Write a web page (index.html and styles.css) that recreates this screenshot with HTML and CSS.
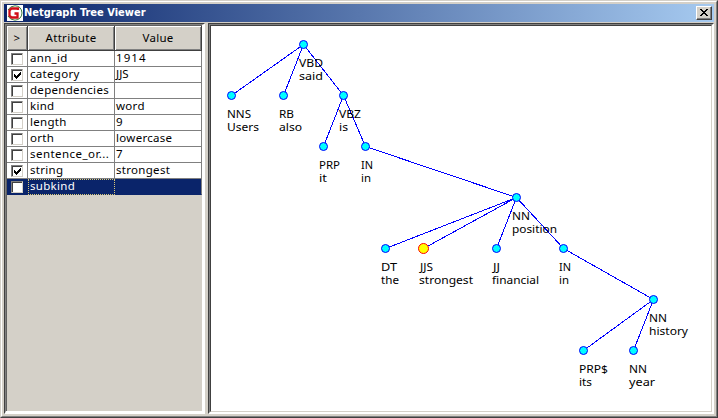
FILE: index.html
```html
<!DOCTYPE html>
<html lang="en">
<head>
<meta charset="utf-8">
<title>Netgraph Tree Viewer</title>
<link rel="stylesheet" href="styles.css">
</head>
<body>
<div class="window">
  <div class="frame">
    <header class="titlebar">
      <svg class="logo" width="16" height="16" viewBox="0 0 16 16">
        <rect width="16" height="16" fill="#fff"/>
        <path d="M1 5Q3 1 8 .8Q14.5 1 15 8Q14.5 14.5 8 15.2Q3 15 1 11" fill="none" stroke="#3d803d" stroke-width="1"/>
        <path d="M11 5V3.500H4.500L2.500 5.500V10.500L4.500 12.500H10.500V8.500H7.500" fill="none" stroke="#d00d16" stroke-width="2.300"/>
      </svg>
      <span class="title">Netgraph Tree Viewer</span>
      <button class="close" aria-label="Close"><svg width="8" height="7" viewBox="0 0 8 7" shape-rendering="crispEdges"><path d="M0 0h2v1h-2zM6 0h2v1h-2zM1 1h2v1h-2zM5 1h2v1h-2zM2 2h4v1h-4zM3 3h2v1h-2zM2 4h4v1h-4zM1 5h2v1h-2zM5 5h2v1h-2zM0 6h2v1h-2zM6 6h2v1h-2z"/></svg></button>
    </header>
    <main class="content">
      <section class="panel attributes">
        <div class="inner">
          <div class="row head"><span>&gt;</span><span>Attribute</span><span>Value</span></div>
          <div class="row"><span><i class="check"></i></span><span>ann_id</span><span class="digits">1914</span></div>
          <div class="row"><span><i class="check"><svg width="7" height="7" viewBox="0 0 7 7" shape-rendering="crispEdges"><path d="M0 2h1v1h1v1h1v-1h1v-1h1v-1h1v-1h1v3h-1v1h-1v1h-1v1h-1v1h-1v-1h-1v-1h-1z"/></svg></i></span><span>category</span><span class="tight">JJS</span></div>
          <div class="row"><span><i class="check"></i></span><span>dependencies</span><span></span></div>
          <div class="row"><span><i class="check"></i></span><span>kind</span><span>word</span></div>
          <div class="row"><span><i class="check"></i></span><span>length</span><span>9</span></div>
          <div class="row"><span><i class="check"></i></span><span>orth</span><span>lowercase</span></div>
          <div class="row"><span><i class="check"></i></span><span class="clipped">sentence_or...</span><span>7</span></div>
          <div class="row"><span><i class="check"><svg width="7" height="7" viewBox="0 0 7 7" shape-rendering="crispEdges"><path d="M0 2h1v1h1v1h1v-1h1v-1h1v-1h1v-1h1v3h-1v1h-1v1h-1v1h-1v1h-1v-1h-1v-1h-1z"/></svg></i></span><span>string</span><span>strongest</span></div>
          <div class="row selected"><span><i class="check"></i></span><span class="focus">subkind</span><span></span></div>
        </div>
      </section>
      <section class="panel tree">
        <div class="well">
        <svg class="canvas" width="500" height="385" viewBox="211 26 500 385">
          <path class="edges" d="M303.500 44.500L231.500 95.500M303.500 44.500L283.500 95.500M303.500 44.500L343.500 95.500M343.500 95.500L323.500 146.500M343.500 95.500L365.500 146.500M365.500 146.500L516.500 197.500M516.500 197.500L385.500 248.500M516.500 197.500L423.500 248.500M516.500 197.500L496.500 248.500M516.500 197.500L563.500 248.500M563.500 248.500L653.500 299.500M653.500 299.500L583.500 350.500M653.500 299.500L633.500 350.500"/>
          <g class="nodes">
            <circle cx="303.500" cy="44.500" r="4"/><circle cx="231.500" cy="95.500" r="4"/><circle cx="283.500" cy="95.500" r="4"/><circle cx="343.500" cy="95.500" r="4"/>
            <circle cx="323.500" cy="146.500" r="4"/><circle cx="365.500" cy="146.500" r="4"/><circle cx="516.500" cy="197.500" r="4"/>
            <circle cx="385.500" cy="248.500" r="4"/><circle class="match" cx="423.500" cy="248.500" r="5"/><circle cx="496.500" cy="248.500" r="4"/><circle cx="563.500" cy="248.500" r="4"/>
            <circle cx="653.500" cy="299.500" r="4"/><circle cx="583.500" cy="350.500" r="4"/><circle cx="633.500" cy="350.500" r="4"/>
          </g>
          <g class="labels">
            <text x="299" y="67" textLength="24" lengthAdjust="spacingAndGlyphs">VBD</text><text x="299" y="80" textLength="24" lengthAdjust="spacingAndGlyphs">said</text>
            <text x="227" y="118" textLength="24" lengthAdjust="spacingAndGlyphs">NNS</text><text x="227" y="131" textLength="32" lengthAdjust="spacingAndGlyphs">Users</text>
            <text x="279" y="118" textLength="15" lengthAdjust="spacingAndGlyphs">RB</text><text x="279" y="131" textLength="23" lengthAdjust="spacingAndGlyphs">also</text>
            <text x="339" y="118" textLength="22" lengthAdjust="spacingAndGlyphs">VBZ</text><text x="339" y="131" textLength="9" lengthAdjust="spacingAndGlyphs">is</text>
            <text x="319" y="169" textLength="21" lengthAdjust="spacingAndGlyphs">PRP</text><text x="319" y="182" textLength="8" lengthAdjust="spacingAndGlyphs">it</text>
            <text x="361" y="169" textLength="12" lengthAdjust="spacingAndGlyphs">IN</text><text x="361" y="182" textLength="10" lengthAdjust="spacingAndGlyphs">in</text>
            <text x="512" y="220" textLength="18" lengthAdjust="spacingAndGlyphs">NN</text><text x="512" y="233" textLength="45" lengthAdjust="spacingAndGlyphs">position</text>
            <text x="381" y="271" textLength="16" lengthAdjust="spacingAndGlyphs">DT</text><text x="381" y="284" textLength="18" lengthAdjust="spacingAndGlyphs">the</text>
            <text x="420" y="271" textLength="13" lengthAdjust="spacingAndGlyphs">JJS</text><text x="419" y="284" textLength="54" lengthAdjust="spacingAndGlyphs">strongest</text>
            <text x="493" y="271" textLength="7" lengthAdjust="spacingAndGlyphs">JJ</text><text x="492" y="284" textLength="47" lengthAdjust="spacingAndGlyphs">financial</text>
            <text x="559" y="271" textLength="12" lengthAdjust="spacingAndGlyphs">IN</text><text x="559" y="284" textLength="10" lengthAdjust="spacingAndGlyphs">in</text>
            <text x="649" y="322" textLength="18" lengthAdjust="spacingAndGlyphs">NN</text><text x="649" y="335" textLength="39" lengthAdjust="spacingAndGlyphs">history</text>
            <text x="579" y="373" textLength="29" lengthAdjust="spacingAndGlyphs">PRP$</text><text x="579" y="386" textLength="13" lengthAdjust="spacingAndGlyphs">its</text>
            <text x="629" y="373" textLength="18" lengthAdjust="spacingAndGlyphs">NN</text><text x="629" y="386" textLength="26" lengthAdjust="spacingAndGlyphs">year</text>
          </g>
        </svg>
        </div>
      </section>
    </main>
  </div>
</div>
</body>
</html>
```
FILE: styles.css
```css
* { box-sizing: border-box; }
body { margin: 0; overflow: hidden; font-family: "Noto Sans", "Open Sans", sans-serif; }
.window {
  width: 718px; height: 418px; background: #d4d0c8;
  border: 1px solid; border-color: #d4d0c8 #404040 #404040 #d4d0c8;
}
.frame {
  height: 416px; padding: 2px;
  border: 1px solid; border-color: #fff #808080 #808080 #fff;
}
.titlebar {
  height: 18px; display: flex; align-items: center; padding: 0 2px 0 3px;
  background: linear-gradient(to right, #0a246a, #a6caf0);
}
.logo { display: block; }
.title {
  margin-left: 1px; flex: 1; color: #fff; white-space: nowrap;
  font: bold 11px/16px "DejaVu Sans Condensed", "DejaVu Sans", sans-serif;
  font-stretch: condensed; letter-spacing: 0;
}
.close {
  width: 16px; height: 14px; padding: 0 1px 1px 0; background: #d4d0c8;
  display: flex; align-items: center; justify-content: center;
  border: 1px solid; border-color: #fff #404040 #404040 #fff;
  box-shadow: inset -1px -1px #808080;
}
.content { display: flex; gap: 3px; margin-top: 1px; height: 391px; }
.panel {
  border: 1px solid #404040; border-right-color: #fff; border-bottom-color: #fff;
}
.attributes { width: 201px; }
.inner {
  height: 389px; border: solid; border-width: 1px 2px 2px 1px;
  border-color: #808080 #fff #fff #808080; box-shadow: inset 1px 1px #606060;
  padding: 1px 0 0 1px;
}
.tree { width: 506px; }
.well {
  height: 389px;
  border: 1px solid; border-color: #808080 #fff #fff #808080;
}
.canvas {
  display: block; box-sizing: content-box; background: #fff;
  border: 1px solid; border-color: #404040 #d4d0c8 #d4d0c8 #404040;
}
.row {
  display: grid; grid-template-columns: 21px 87px 87px; height: 16px;
  font-size: 11.5px; line-height: 13px; letter-spacing: 0.3px; color: #000;
}
.row > span {
  background: #fff; border-right: 1px solid #808080; border-bottom: 1px solid #808080;
  padding-left: 1px; white-space: nowrap; overflow: hidden;
}
.row > span:first-child { display: flex; justify-content: center; align-items: center; padding: 0; }
.row > span:nth-child(2) { padding-left: 2px; }
.row.head { height: 25px; line-height: 24px; }
.row.head > span {
  background: #d4d0c8; text-align: center; padding: 0;
  border-color: #404040; box-shadow: inset 1px 1px #fff, inset -1px -1px #808080;
}
.check {
  display: flex; align-items: center; justify-content: center;
  width: 12px; height: 12px; background: #fff;
  border: 1px solid; border-color: #808080 #d4d0c8 #d4d0c8 #808080;
  box-shadow: inset 1px 1px #404040;
}
.check svg { margin: 1px 0 0 1px; }
.row > .digits { letter-spacing: 1.1px; }
.row > .tight { letter-spacing: 0; }
.row > .clipped { letter-spacing: 0.45px; }
.row.selected > span { background: #0a246a; color: #fff; border-color: #0a246a; }
.row.selected > span:last-child { border-right-color: #808080; }
.row.selected > .focus { border: 1px dotted #d9c878; line-height: 12px; padding-left: 1px; }
.edges { fill: none; stroke: #0000ff; stroke-width: 1; shape-rendering: crispEdges; }
.nodes { fill: #00ffff; stroke: #0000ff; stroke-width: 1; }
.nodes .match { fill: #ffff00; stroke: #ff0000; }
.labels { font-size: 11px; fill: #000; }
```
